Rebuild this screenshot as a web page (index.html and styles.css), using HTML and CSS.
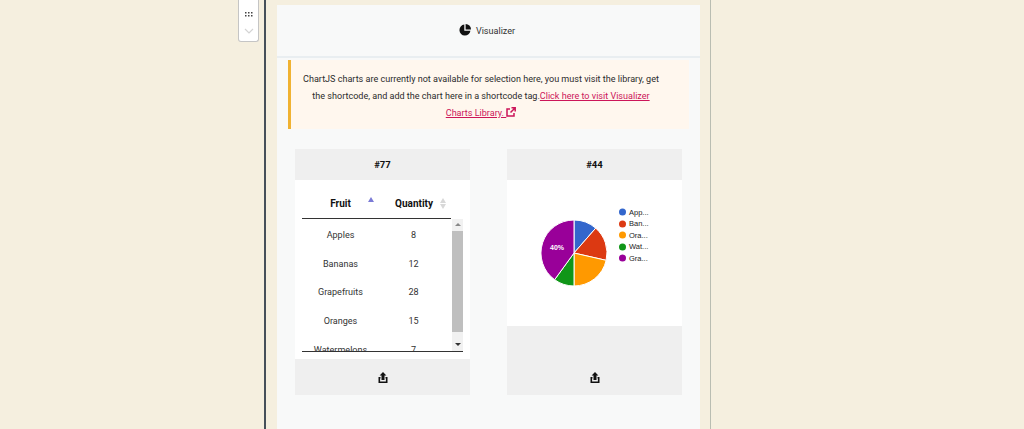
FILE: index.html
```html
<!DOCTYPE html>
<html lang="en">
<head>
  <meta charset="UTF-8">
  <title>Visualizer block</title>
  <link rel="stylesheet" href="styles.css">
</head>
<body>

<div class="page">
  <div class="gutter">
    <div class="block-mover">
      <svg class="mover-grip" width="8" height="6" viewBox="0 0 8 6"><path d="M0 0h1.5v1.5H0zM3 0h1.5v1.5H3zM6 0h1.5v1.5H6zM0 3h1.5v1.5H0zM3 3h1.5v1.5H3zM6 3h1.5v1.5H6z"/></svg>
      <svg class="mover-down" width="10" height="6" viewBox="0 0 10 6"><path d="M1 1l4 4 4-4"/></svg>
    </div>
  </div>

  <div class="editor">
    <div class="panel">
      <div class="panel-head">
        <svg class="pie-icon" width="12" height="12" viewBox="0 0 12 12"><path d="M5.3.6v6.1h6.1A5.5 5.500 0 1 1 5.300.6z"/><path d="M6.600 0A5.400 5.400 0 0 1 12 5.400H6.600z"/></svg>
        <span>Visualizer</span>
      </div>

      <div class="notice">
        ChartJS charts are currently not available for selection here, you must visit the library, get the shortcode, and add the chart here in a shortcode tag.<a href="#">Click here to visit Visualizer Charts Library. <svg class="ext-icon" width="10" height="10" viewBox="0 0 10 10"><path d="M4 2H1v7h7V6" /><path d="M5.5 .8h3.7v3.7M9 1L4.500 5.500"/></svg></a>
      </div>

      <div class="cards">
        <div class="card">
          <div class="card-head">#77</div>
          <div class="card-body table-body">
            <div class="table-cols">
              <div class="col-title col-fruit">Fruit<i class="sort-up active"></i></div>
              <div class="col-title col-qty">Quantity<span class="sort-pair"><i class="sort-up"></i><i class="sort-down"></i></span></div>
            </div>
            <div class="table-scroll">
              <div class="rows">
                <div class="row"><span>Apples</span><span>8</span></div>
                <div class="row"><span>Bananas</span><span>12</span></div>
                <div class="row"><span>Grapefruits</span><span>28</span></div>
                <div class="row"><span>Oranges</span><span>15</span></div>
                <div class="row"><span>Watermelons</span><span>7</span></div>
              </div>
              <div class="scrollbar">
                <i class="arrow-up"></i>
                <div class="thumb"></div>
                <i class="arrow-down"></i>
              </div>
            </div>
          </div>
          <div class="card-foot">
            <svg class="share-icon" width="10" height="11" viewBox="0 0 10 11"><path d="M5 0l3.400 3.600H6.500V8h-3V3.600H1.600z"/><path d="M.5 5h2v1.600h-.4v2.800h5.800V6.600h-.4V5h2v6H.5z"/></svg>
          </div>
        </div>

        <div class="card">
          <div class="card-head">#44</div>
          <div class="card-body chart-body">
            <svg class="pie-chart" width="175" height="146" viewBox="0 0 175 146">
              <g transform="translate(67 73)" stroke="#fff" stroke-width="1">
                <path fill="#3366cc" d="M0 0V-33A33 33 0 0 1 21.710 -24.850z"/>
                <path fill="#dc3912" d="M0 0L21.710 -24.850A33 33 0 0 1 32.170 7.340z"/>
                <path fill="#ff9900" d="M0 0L32.170 7.340A33 33 0 0 1 0 33z"/>
                <path fill="#109618" d="M0 0V33A33 33 0 0 1 -19.400 26.700z"/>
                <path fill="#990099" d="M0 0L-19.400 26.700A33 33 0 0 1 0 -33z"/>
              </g>
              <text class="pie-label" x="43" y="70">40%</text>
              <g class="legend">
                <circle cx="115.500" cy="32" r="3.500" fill="#3366cc"/><text x="122" y="34.500">App...</text>
                <circle cx="115.500" cy="44" r="3.500" fill="#dc3912"/><text x="122" y="46">Ban...</text>
                <circle cx="115.500" cy="55" r="3.500" fill="#ff9900"/><text x="122" y="57.500">Ora...</text>
                <circle cx="115.500" cy="67" r="3.500" fill="#109618"/><text x="122" y="69">Wat...</text>
                <circle cx="115.500" cy="78" r="3.500" fill="#990099"/><text x="122" y="80.500">Gra...</text>
              </g>
            </svg>
          </div>
          <div class="card-foot card-foot-tall">
            <svg class="share-icon" width="10" height="11" viewBox="0 0 10 11"><path d="M5 0l3.400 3.600H6.500V8h-3V3.600H1.600z"/><path d="M.5 5h2v1.600h-.4v2.800h5.800V6.600h-.4V5h2v6H.5z"/></svg>
          </div>
        </div>
      </div>
    </div>
  </div>
</div>

</body>
</html>
```

FILE: styles.css
```css
html, body {
  height: 100%;
}

body {
  margin: 0;
  overflow: hidden;
  background-color: #f5efdf;
  font-family: Roboto, "Noto Sans", sans-serif;
  font-size: 9.05px;
  color: #1e1e1e;
}

.page {
  display: flex;
  height: 429px;
}

.gutter {
  width: 264px;
  flex-shrink: 0;
  padding-left: 238px;
  box-sizing: border-box;
}

.block-mover {
  width: 21px;
  height: 42px;
  box-sizing: border-box;
  background: white;
  border: 1px solid #c5c5c5;
  border-top: none;
  border-radius: 0 0 3px 3px;
  display: flex;
  flex-direction: column;
  align-items: center;
  padding-top: 12px;
  gap: 10px;
}

.mover-grip {
  fill: #444;
}

.mover-down {
  fill: none;
  stroke: #d4d4d4;
  stroke-width: 1.2;
}

.editor {
  width: 447px;
  flex-shrink: 0;
  box-sizing: border-box;
  border-left: 2px solid #46505a;
  border-right: 1px solid #b9bdb2;
  padding: 5px 10px 0 11px;
}

.panel {
  background: #f8f9f9;
  height: 424px;
  width: 423px;
}

.panel-head {
  height: 51px;
  border-bottom: 2px solid #e9eef1;
  display: flex;
  align-items: center;
  justify-content: center;
  gap: 5px;
  padding-right: 3px;
}

.pie-icon {
  fill: #111;
  margin-top: -1px;
}

.panel-head span {
  color: #333;
  margin-top: 1px;
}

.notice {
  margin: 2px 11px 0;
  height: 69px;
  box-sizing: border-box;
  background: #fff7ee;
  border-left: 3px solid #f0b232;
  padding: 11px 27px 0 9px;
  text-align: center;
  line-height: 17px;
  color: #2b2b2b;
}

.notice a {
  color: #cc1559;
}

.ext-icon {
  fill: none;
  stroke: #cc1559;
  stroke-width: 1.5;
  vertical-align: -1px;
}

.cards {
  display: flex;
  gap: 37px;
  padding: 20px 18px 0;
}

.card {
  width: 175px;
  height: 246px;
  display: flex;
  flex-direction: column;
}

.card-head {
  height: 31px;
  background: #efefef;
  display: flex;
  align-items: center;
  justify-content: center;
  font-size: 9.5px;
  font-weight: 700;
  color: #111;
}

.card-body {
  background: white;
  flex: 1;
  overflow: hidden;
}

.card-foot {
  height: 36px;
  background: #efefef;
  display: flex;
  align-items: center;
  justify-content: center;
}

.card-foot-tall {
  height: 69px;
  align-items: flex-end;
  padding-bottom: 12px;
  box-sizing: border-box;
}

.share-icon {
  fill: #111;
}

.table-body {
  padding: 0 7px;
}

.table-cols {
  height: 39px;
  width: 149px;
  box-sizing: border-box;
  border-bottom: 1px solid #333;
  padding-top: 9px;
  display: flex;
  align-items: center;
  font-size: 10px;
  font-weight: 700;
  color: #111;
}

.col-title {
  display: flex;
  align-items: center;
  justify-content: center;
  position: relative;
}

.col-fruit {
  width: 77px;
}

.col-qty {
  width: 72px;
  padding-left: 11px;
  box-sizing: border-box;
}

.sort-up, .sort-down {
  display: block;
  width: 0;
  height: 0;
  border-left: 3px solid transparent;
  border-right: 3px solid transparent;
}

.sort-up {
  border-bottom: 5px solid #d8d8d8;
}

.sort-down {
  border-top: 5px solid #d8d8d8;
}

.sort-up.active {
  border-bottom-color: #7b7bd6;
  position: absolute;
  left: 66px;
  top: -1px;
}

.sort-pair {
  display: flex;
  flex-direction: column;
  gap: 1px;
  margin-left: 7px;
}

.table-scroll {
  display: flex;
  height: 133px;
  width: 161px;
  border-bottom: 1px solid #333;
  box-sizing: border-box;
  overflow: hidden;
}

.rows {
  width: 150px;
  flex-shrink: 0;
  padding-top: 2px;
}

.row {
  height: 28.6px;
  display: flex;
  align-items: center;
  color: #333;
}

.row span {
  width: 77px;
  text-align: center;
}

.row span + span {
  width: 69px;
}

.scrollbar {
  width: 11px;
  background: #f1f1f1;
  display: flex;
  flex-direction: column;
  align-items: center;
}

.thumb {
  width: 100%;
  height: 101px;
  background: #bfbfbf;
  margin: 5px 0 auto;
}

.arrow-up, .arrow-down {
  display: block;
  width: 0;
  height: 0;
  border-left: 3px solid transparent;
  border-right: 3px solid transparent;
}

.arrow-up {
  border-bottom: 3px solid #888;
  margin-top: 4px;
}

.arrow-down {
  border-top: 3px solid #333;
  margin-bottom: 5px;
}

.chart-body {
  display: flex;
}

.pie-chart {
  display: block;
}

.pie-label {
  font-family: "Liberation Sans", sans-serif;
  font-size: 7px;
  font-weight: bold;
  fill: white;
}

.legend text {
  font-family: "Liberation Sans", sans-serif;
  font-size: 7.500px;
  fill: #222;
}
```
